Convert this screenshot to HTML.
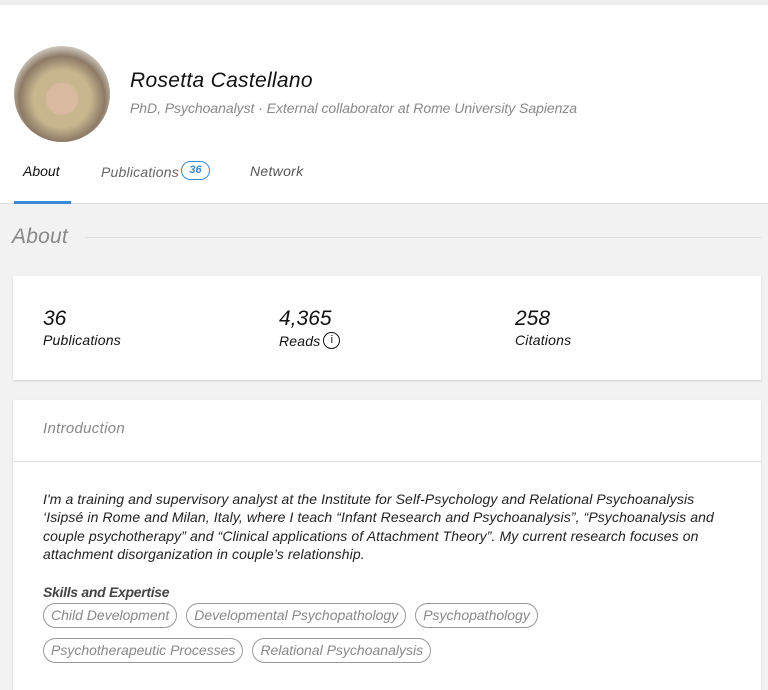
<!DOCTYPE html>
<html><head><meta charset="utf-8"><style>
*{margin:0;padding:0;box-sizing:border-box}
body{width:768px;height:681px;overflow:hidden;background:#f2f2f2;font-family:"Liberation Sans",sans-serif;font-style:italic;color:#111;position:relative}
.a{position:absolute;white-space:nowrap}
.top{position:absolute;left:0;top:0;width:768px;height:204px;background:#fff;border-top:5px solid #eee;border-bottom:1px solid #ddd}
.card{position:absolute;left:13px;width:748px;background:#fff;box-shadow:0 1px 2px rgba(0,0,0,.15)}
.tag{display:inline-block;border:1px solid #999;border-radius:13px;height:25px;line-height:23px;padding:0 7px;color:#888;font-size:14px;letter-spacing:0px;margin-right:9px}
</style></head><body>
<div class="top"></div>
<div class="a" style="left:14px;top:46px;width:96px;height:96px;border-radius:50%;background:radial-gradient(circle at 50% 55%,#d9b9a0 0 22%,#c9b68f 23% 40%,#8c7a66 60%,#d5cfc7 75%)"></div>
<div class="a" style="left:130px;top:69px;font-size:21px;letter-spacing:.3px;color:#111">Rosetta Castellano</div>
<div class="a" style="left:130px;top:100px;font-size:14px;letter-spacing:-.05px;color:#888">PhD, Psychoanalyst · External collaborator at Rome University Sapienza</div>
<div class="a" style="left:23px;top:163px;font-size:14px;letter-spacing:0;color:#111">About</div>
<div class="a" style="left:14px;top:201px;width:57px;height:3px;background:#3a8ad8"></div>
<div class="a" style="left:101px;top:164px;font-size:14px;letter-spacing:.2px;color:#666">Publications</div>
<div class="a" style="left:181px;top:161px;width:29px;height:19px;border:1.5px solid #3a8ad8;border-radius:10px;color:#3a8ad8;font-size:11px;font-weight:bold;text-align:center;line-height:16px">36</div>
<div class="a" style="left:250px;top:163px;font-size:14px;letter-spacing:.3px;color:#555">Network</div>
<div class="a" style="left:12px;top:225px;font-size:21px;color:#888;letter-spacing:.2px">About</div>
<div class="a" style="left:85px;top:237px;width:676px;height:1px;background:#ddd"></div>
<div class="card" style="top:276px;height:104px"></div>
<div class="a" style="left:43px;top:307px;font-size:21px">36</div>
<div class="a" style="left:43px;top:332px;font-size:14px;letter-spacing:.2px">Publications</div>
<div class="a" style="left:279px;top:307px;font-size:21px">4,365</div>
<div class="a" style="left:279px;top:332px;font-size:14px;letter-spacing:.2px;display:flex;align-items:center">Reads<span style="display:inline-block;margin-left:3px;width:17px;height:17px;border:1.3px solid #111;border-radius:50%;font-size:11px;text-align:center;line-height:15px;font-style:normal">i</span></div>
<div class="a" style="left:515px;top:307px;font-size:21px">258</div>
<div class="a" style="left:515px;top:332px;font-size:14px;letter-spacing:.2px">Citations</div>
<div class="card" style="top:400px;height:290px"></div>
<div class="a" style="left:43px;top:420px;font-size:15px;color:#888;letter-spacing:.3px">Introduction</div>
<div class="a" style="left:13px;top:461px;width:748px;height:1px;background:#e3e3e3"></div>
<div class="a" style="left:43px;top:490px;font-size:14px;line-height:18.3px;letter-spacing:.1px;color:#222;white-space:nowrap">I'm a training and supervisory analyst at the Institute for Self-Psychology and Relational Psychoanalysis<br>‘Isipsé in Rome and Milan, Italy, where I teach “Infant Research and Psychoanalysis”, “Psychoanalysis and<br>couple psychotherapy” and “Clinical applications of Attachment Theory”. My current research focuses on<br>attachment disorganization in couple’s relationship.</div>
<div class="a" style="left:43px;top:584px;font-size:14px;font-weight:bold;color:#444;letter-spacing:-.3px">Skills and Expertise</div>
<div class="a" style="left:43px;top:603px"><span class="tag">Child Development</span><span class="tag">Developmental Psychopathology</span><span class="tag">Psychopathology</span></div>
<div class="a" style="left:43px;top:638px"><span class="tag">Psychotherapeutic Processes</span><span class="tag">Relational Psychoanalysis</span></div>
</body></html>
